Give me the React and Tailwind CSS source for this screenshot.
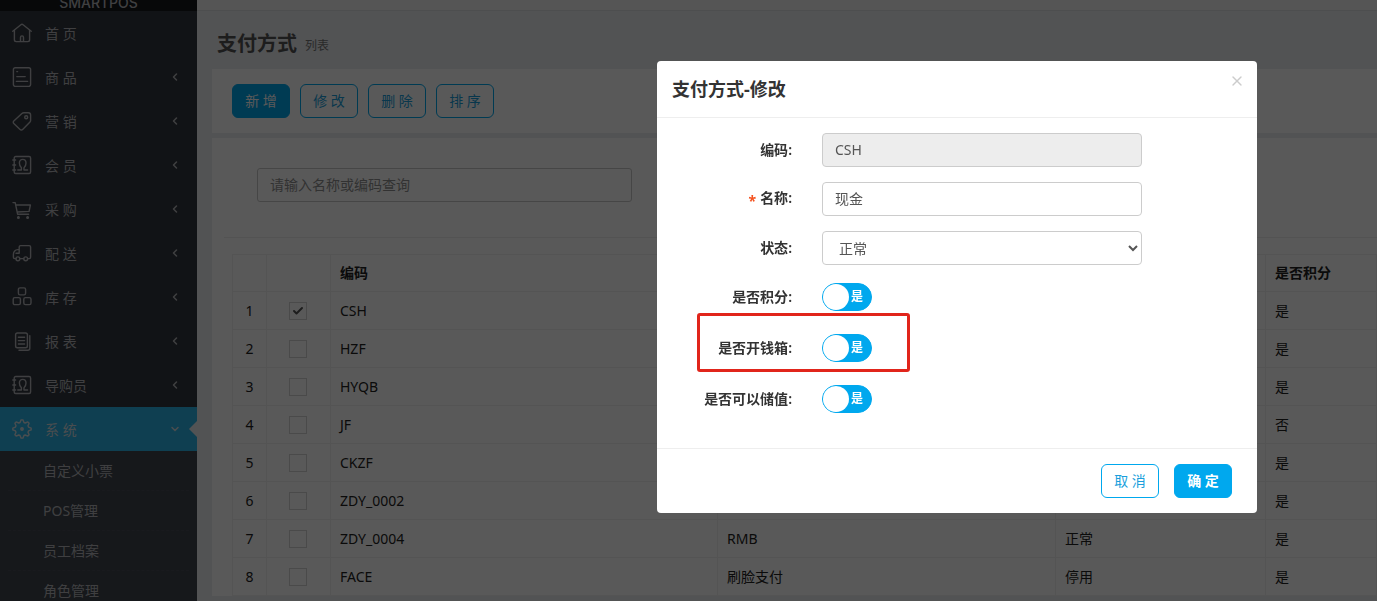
import React, { useState } from 'react'
import { Check, ChevronDown, ChevronLeft, X } from 'lucide-react'

// ---------------- Icons ----------------
const Icon = ({ children }) => (
  <svg
    className="w-5 h-5 shrink-0"
    viewBox="0 0 20 20"
    fill="none"
    stroke="currentColor"
    strokeWidth="1.4"
    strokeLinecap="round"
    strokeLinejoin="round"
    aria-hidden="true"
  >
    {children}
  </svg>
)

const gearPoints = Array.from({ length: 32 }, (_, i) => {
  const r = i % 4 < 2 ? 9.2 : 6.8
  const a = ((i - 0.5) * Math.PI) / 16 - Math.PI / 2
  return `${(10 + r * Math.cos(a)).toFixed(2)},${(10 + r * Math.sin(a)).toFixed(2)}`
}).join(' ')

const icons = {
  home: (
    <Icon>
      <path d="M.8 8.2 8.9 1.7a1.8 1.8 0 0 1 2.2 0l8.1 6.5" />
      <path d="M2.4 7.2v9.6a1.8 1.8 0 0 0 1.8 1.8h11.6a1.8 1.8 0 0 0 1.8-1.8V7.2" />
      <path d="M8.5 18.4v-4a1.5 1.5 0 0 1 3 0v4" />
    </Icon>
  ),
  goods: (
    <Icon>
      <rect x="1.4" y=".8" width="17.2" height="18.6" rx="1.8" />
      <path d="M4.8 4.6h.8M4.8 9.6h8.4M4.4 14.4h11.2" />
    </Icon>
  ),
  tag: (
    <Icon>
      <path d="M12 1.8h4.4a2.2 2.2 0 0 1 2.2 2.2v5.4c0 .6-.2 1.1-.6 1.5l-7.1 7.3a2.2 2.2 0 0 1-3.1 0l-6-5.6a1.7 1.7 0 0 1 0-2.5l8.1-7.6a3 3 0 0 1 2.1-.7z" />
      <circle cx="14.2" cy="6.2" r="1.5" />
    </Icon>
  ),
  contact: (
    <Icon>
      <rect x="2.2" y="1.5" width="16.4" height="17" rx="1.5" />
      <path d="M.8 5h2.8M.8 10h2.8M.8 15h2.8" />
      <path d="M5.8 15h3.6v-2.2C8 11.6 7.4 9.8 7.4 8 7.4 5.8 8.6 4.4 10.7 4.4S14 5.8 14 8c0 1.8-.6 3.6-2 4.8V15h3.6" />
    </Icon>
  ),
  cart: (
    <Icon>
      <path d="M1 3.6h2.2l2.4 11.6h11M4 6h14.4l-1.3 6.4L5.2 13" />
      <circle cx="6.4" cy="18.4" r=".8" fill="currentColor" />
      <circle cx="15.6" cy="18.4" r=".8" fill="currentColor" />
    </Icon>
  ),
  truck: (
    <Icon>
      <path d="M7.2 9.8V4a1.4 1.4 0 0 1 1.4-1.4h8.6A1.4 1.4 0 0 1 18.6 4v10.2a1.4 1.4 0 0 1-1.4 1.4h-1.4M7.2 6.6H5.6c-2.2 0-4.2 2.2-4.2 4.8v2.8a1.4 1.4 0 0 0 1.4 1.4h1.1M7.9 15.6h3.8M4 10.2h3.2" />
      <circle cx="5.9" cy="15.8" r="1.9" />
      <circle cx="13.7" cy="15.8" r="1.9" />
    </Icon>
  ),
  stock: (
    <Icon>
      <rect x="6.4" y=".9" width="7.2" height="7" rx="1.6" />
      <rect x="1.2" y="10.6" width="7.2" height="7" rx="1.6" />
      <rect x="11.8" y="10.6" width="7.2" height="7" rx="1.6" />
    </Icon>
  ),
  report: (
    <Icon>
      <rect x="3.6" y="2" width="11.8" height="14.8" rx="1.8" />
      <path d="M17.8 4.6v12.6a2 2 0 0 1-2 2H7M6.4 6.2h6.2M6.4 9.6h6.2M6.4 13h6.2" />
    </Icon>
  ),
  gear: (
    <Icon>
      <polygon points={gearPoints} />
      <circle cx="10" cy="10" r="1.2" fill="currentColor" />
    </Icon>
  ),
}

// ---------------- Data ----------------
const menu = [
  { label: '首 页', icon: 'home', leaf: true },
  { label: '商 品', icon: 'goods' },
  { label: '营 销', icon: 'tag' },
  { label: '会 员', icon: 'contact' },
  { label: '采 购', icon: 'cart' },
  { label: '配 送', icon: 'truck' },
  { label: '库 存', icon: 'stock' },
  { label: '报 表', icon: 'report' },
  { label: '导购员', icon: 'contact' },
  { label: '系 统', icon: 'gear', active: true },
]

const subMenu = ['自定义小票', 'POS管理', '员工档案', '角色管理']

const rows = [
  { code: 'CSH', points: '是' },
  { code: 'HZF', points: '是' },
  { code: 'HYQB', points: '是' },
  { code: 'JF', points: '否' },
  { code: 'CKZF', points: '是' },
  { code: 'ZDY_0002', points: '是' },
  { code: 'ZDY_0004', name: 'RMB', status: '正常', points: '是' },
  { code: 'FACE', name: '刷脸支付', status: '停用', points: '是' },
]

// ---------------- Shared controls ----------------
const Button = ({ primary, bold, children }) => (
  <button
    type="button"
    className={`h-[34px] min-w-[58px] px-2 rounded-md border border-[#00a8ee] text-sm ${
      primary ? 'bg-[#00a8ee] text-white' : 'bg-white text-[#1a9fdc]'
    } ${bold ? 'font-bold' : ''}`}
  >
    {children}
  </button>
)

const Field = ({ id, label, required, children }) => (
  <div className="flex items-center">
    <label htmlFor={id} className="flex w-[135px] mr-[30px] justify-end font-semibold text-[#333]">
      {required && <span className="mr-1 pt-[3px] font-bold text-[#f4511e]">*</span>}
      {label}:
    </label>
    {children}
  </div>
)

const Toggle = ({ id, label, marked }) => {
  const [on, setOn] = useState(true)
  return (
    <div className="relative h-9 pb-[2px]">
      <Field id={id} label={label}>
        <span className="relative flex h-[34px] items-center">
          <input
            id={id}
            type="checkbox"
            role="switch"
            checked={on}
            onChange={event => setOn(event.target.checked)}
            className="peer appearance-none w-[50px] h-7 rounded-full border border-[#ccc] bg-[#ccc] checked:border-[#00a8ee] checked:bg-[#00a8ee]"
          />
          <span className="pointer-events-none absolute left-px w-[26px] h-[26px] rounded-full bg-white" />
          <span className="pointer-events-none absolute left-[29px] text-xs font-bold text-white">
            {on ? '是' : '否'}
          </span>
        </span>
      </Field>
      {marked && (
        <div className="pointer-events-none absolute -top-[18px] left-10 w-[213px] h-[59px] rounded-[3px] border-3 border-[#e1251b]" />
      )}
    </div>
  )
}

// ---------------- Sidebar ----------------
const Sidebar = () => (
  <aside className="w-[197px] shrink-0 bg-[#33373f] text-[#b4b6ba]">
    <div className="flex h-[11px] items-end justify-center overflow-hidden bg-[#14171c] font-[Inter] text-sm leading-4 font-medium">
      SMARTPOS
    </div>
    <nav>
      {menu.map(item => (
        <a
          key={item.label}
          href="#"
          className={`relative flex h-11 items-center pl-3 pr-4 ${item.active ? 'bg-[#2cb5e8] text-[#d3dde2]' : ''}`}
        >
          {icons[item.icon]}
          <span className="ml-[13px] flex-1 pt-px">{item.label}</span>
          {!item.leaf &&
            (item.active ? <ChevronDown size={12} strokeWidth={3} /> : <ChevronLeft size={12} strokeWidth={3} />)}
          {item.active && (
            <span className="absolute right-0 border-y-8 border-r-8 border-y-transparent border-r-[#ebedf0]" />
          )}
        </a>
      ))}
      <div className="bg-[#41454f] px-2">
        {subMenu.map(name => (
          <a key={name} href="#" className="flex h-10 items-center border-b border-dashed border-[#484c56] pl-[35px]">
            {name}
          </a>
        ))}
      </div>
    </nav>
  </aside>
)

// ---------------- Payment list ----------------
const PaymentList = () => {
  const [selected, setSelected] = useState('CSH')

  return (
    <main className="min-w-0 flex-1 bg-[#ebedf0]">
      <div className="h-[11px] border-b border-[#dcdee2] bg-[#f2f2f2]" />
      <h1 className="flex h-[58px] items-center pt-2 pl-5 text-xl font-bold text-[#555]">
        支付方式
        <small className="ml-2 pt-1 text-xs font-normal text-[#777]">列表</small>
      </h1>

      <div className="ml-[15px] flex gap-2.5 bg-white px-5 py-[15px]">
        <Button primary>新 增</Button>
        <Button>修 改</Button>
        <Button>删 除</Button>
        <Button>排 序</Button>
      </div>

      <div className="mt-[5px] ml-[15px] bg-white pt-[30px] pl-3">
        <div className="border-b border-[#eee] pb-[35px] pl-[33px]">
          <input
            type="text"
            aria-label="请输入名称或编码查询"
            placeholder="请输入名称或编码查询"
            className="block h-[34px] w-[375px] rounded-[3px] border border-[#c8c8c8] px-3 pb-[2px] placeholder:text-[#8f8f8f]"
          />
        </div>

        <div className="pt-4 pl-2">
          <table className="w-full table-fixed border-collapse text-left text-[#222] [&_td]:border [&_th]:border [&_td]:border-[#f0f0f0] [&_th]:border-[#f0f0f0]">
            <thead>
              <tr className="h-[37px]">
                <th className="w-[34px]" />
                <th className="w-16" />
                <th className="w-[387px] px-[9px]">编码</th>
                <th className="w-[338px] px-[9px]">名称</th>
                <th className="w-[210px] px-[9px]">状态</th>
                <th className="px-[9px]">是否积分</th>
              </tr>
            </thead>
            <tbody>
              {rows.map((row, index) => (
                <tr key={row.code} className="h-[38px]">
                  <td className="text-center">{index + 1}</td>
                  <td className="pr-[2px]">
                    <span className="relative mx-auto flex h-[18px] w-[18px]">
                      <input
                        type="checkbox"
                        aria-label={row.code}
                        checked={selected === row.code}
                        onChange={() => setSelected(row.code)}
                        className="h-[18px] w-[18px] appearance-none border border-[#d4d4d4]"
                      />
                      {selected === row.code && (
                        <Check className="pointer-events-none absolute inset-[3px] text-[#555]" size={12} strokeWidth={4} />
                      )}
                    </span>
                  </td>
                  <td className="px-[9px]">{row.code}</td>
                  <td className="px-[9px]">{row.name}</td>
                  <td className="px-[9px]">{row.status}</td>
                  <td className="px-[9px]">{row.points}</td>
                </tr>
              ))}
            </tbody>
          </table>
        </div>
      </div>
    </main>
  )
}

// ---------------- Edit dialog ----------------
const EditDialog = () => {
  const [name, setName] = useState('现金')

  return (
    <div className="fixed inset-0 flex items-start justify-end bg-black/65 pt-[61px] pr-[120px]">
      <div role="dialog" aria-labelledby="dialog-title" className="w-[600px] rounded bg-white">
        <div className="flex h-[57px] items-center justify-between border-b border-[#eee] pl-[15px] pr-3">
          <h2 id="dialog-title" className="text-lg font-bold text-[#333]">支付方式-修改</h2>
          <button type="button" aria-label="关闭" className="self-start pt-3 text-[#ccc]">
            <X size={16} strokeWidth={2} />
          </button>
        </div>

        <form className="flex flex-col gap-[15px] pt-[15px] pb-[30px]">
          <Field id="code" label="编码">
            <input
              id="code"
              type="text"
              value="CSH"
              readOnly
              className="h-[34px] w-80 rounded border border-[#ccc] bg-[#ededed] px-3 pb-[2px] text-[#555]"
            />
          </Field>
          <Field id="name" label="名称" required>
            <input
              id="name"
              type="text"
              value={name}
              onChange={event => setName(event.target.value)}
              className="h-[34px] w-80 rounded border border-[#ccc] px-3 pb-[2px] text-[#555]"
            />
          </Field>
          <Field id="status" label="状态">
            <select id="status" className="h-[34px] w-80 rounded border border-[#ccc] bg-white px-3 text-[#555]">
              <option>正常</option>
              <option>停用</option>
            </select>
          </Field>
          <Toggle id="points" label="是否积分" />
          <Toggle id="drawer" label="是否开钱箱" marked />
          <Toggle id="stored" label="是否可以储值" />
        </form>

        <div className="flex justify-end gap-[15px] border-t border-[#eee] py-[15px] pr-[25px]">
          <Button>取 消</Button>
          <Button primary bold>确 定</Button>
        </div>
      </div>
    </div>
  )
}

const App = () => (
  <div className="flex h-screen overflow-hidden font-['Noto_Sans','Noto_Sans_CJK_SC',sans-serif] text-sm">
    <Sidebar />
    <PaymentList />
    <EditDialog />
  </div>
)

export default App
